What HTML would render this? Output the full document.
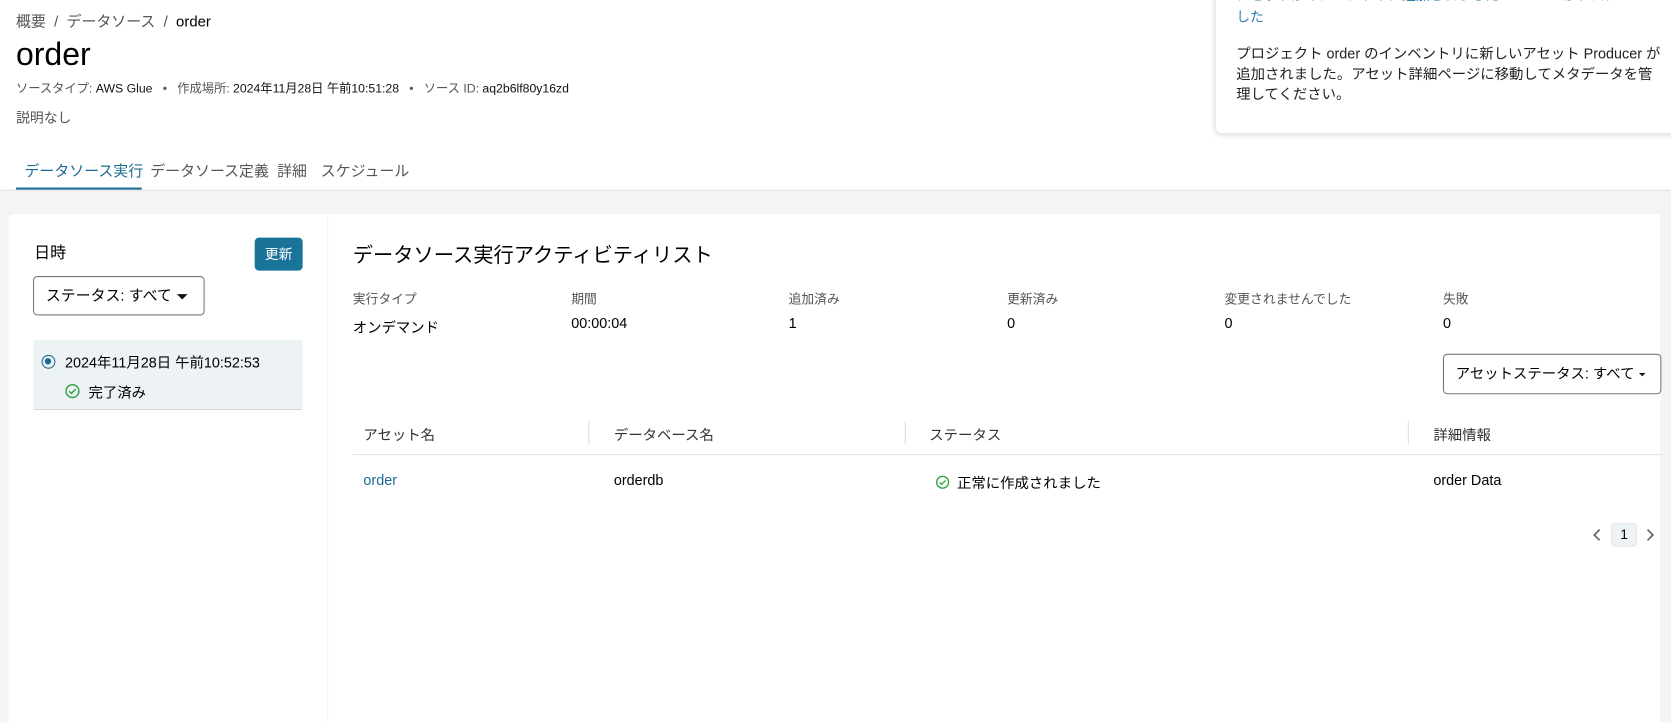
<!DOCTYPE html>
<html><head><meta charset="utf-8">
<style>
*{box-sizing:border-box;margin:0;padding:0}
html,body{width:1671px;height:716px;overflow:hidden;background:#fff}
#w{position:absolute;left:0;top:0;width:1568px;height:672px;transform:scale(1.06569);transform-origin:0 0;font-family:"Liberation Sans","Noto Sans CJK JP",sans-serif;color:#000}
.abs{position:absolute;white-space:nowrap}
.g{color:#555}
.blue{color:#1a6b94}
</style></head><body><div id="w">
<div class="abs g" style="left:15px;top:10px;font-size:14px">概要 &nbsp;/&nbsp; データソース &nbsp;/&nbsp; <span style="color:#000">order</span></div>
<div class="abs" style="left:15px;top:35px;font-size:30px">order</div>
<div class="abs g" style="left:15px;top:75px;font-size:11.5px">ソースタイプ: <span style="color:#111">AWS Glue</span> &nbsp; • &nbsp; 作成場所: <span style="color:#111">2024年11月28日 午前10:51:28</span> &nbsp; • &nbsp; ソース ID: <span style="color:#111">aq2b6lf80y16zd</span></div>
<div class="abs g" style="left:15px;top:100px;font-size:13px">説明なし</div>
<div class="abs" style="left:23px;top:150px;font-size:14px;color:#1a6b94">データソース実行</div>
<div class="abs g" style="left:141px;top:150px;font-size:14px">データソース定義</div>
<div class="abs g" style="left:260px;top:150px;font-size:14px">詳細</div>
<div class="abs g" style="left:301px;top:150px;font-size:14px">スケジュール</div>
<div class="abs" style="left:15px;top:176px;width:118px;height:3px;background:#1a6b94"></div>
<div class="abs" style="left:0;top:178px;width:1568px;height:500px;background:#f4f4f4;border-top:1px solid #e2e2e2"></div>
<div class="abs" style="left:8px;top:201px;width:299px;height:480px;background:#fff;border-radius:4px 0 0 0"></div>
<div class="abs" style="left:32px;top:226px;font-size:15px">日時</div>
<div class="abs" style="left:239px;top:223px;width:45px;height:31px;background:#1a7399;border-radius:4px;color:#fff;font-size:13px;text-align:center;line-height:31px">更新</div>
<div class="abs" style="left:31px;top:259px;width:161px;height:37px;border:1px solid #777;border-radius:4px;font-size:14px;line-height:35px;padding-left:11px">ステータス: すべて<span style="position:absolute;left:134px;top:16px;border-left:5px solid transparent;border-right:5px solid transparent;border-top:5px solid #111"></span></div>
<div class="abs" style="left:31px;top:319px;width:253px;height:66px;background:#edf3f5;border-radius:3px;border-bottom:1px solid #c9cfd2"></div>
<div class="abs" style="left:39px;top:333px;width:13px;height:13px;border:1.5px solid #1a6b94;border-radius:50%"><div style="margin:2px;width:6px;height:6px;border-radius:50%;background:#1a6b94"></div></div>
<div class="abs" style="left:61px;top:329px;font-size:13.5px">2024年11月28日 午前10:52:53</div>
<svg class="abs" style="left:61px;top:360px" width="14" height="14" viewBox="0 0 14 14"><circle cx="7" cy="7" r="6" fill="none" stroke="#37a448" stroke-width="1.4"/><path d="M4 7.2l2 2 4-4" fill="none" stroke="#37a448" stroke-width="1.4"/></svg>
<div class="abs" style="left:83px;top:357px;font-size:13.5px">完了済み</div>
<div class="abs" style="left:308px;top:201px;width:1250px;height:480px;background:#fff"></div>
<div class="abs" style="left:331px;top:225px;font-size:19px">データソース実行アクティビティリスト</div>
<div class="abs g" style="left:331px;top:272px;font-size:12px">実行タイプ</div>
<div class="abs" style="left:331px;top:296px;font-size:13.5px">オンデマンド</div>
<div class="abs g" style="left:536px;top:272px;font-size:12px">期間</div>
<div class="abs" style="left:536px;top:296px;font-size:13.5px">00:00:04</div>
<div class="abs g" style="left:740px;top:272px;font-size:12px">追加済み</div>
<div class="abs" style="left:740px;top:296px;font-size:13.5px">1</div>
<div class="abs g" style="left:945px;top:272px;font-size:12px">更新済み</div>
<div class="abs" style="left:945px;top:296px;font-size:13.5px">0</div>
<div class="abs g" style="left:1149px;top:272px;font-size:12px">変更されませんでした</div>
<div class="abs" style="left:1149px;top:296px;font-size:13.5px">0</div>
<div class="abs g" style="left:1354px;top:272px;font-size:12px">失敗</div>
<div class="abs" style="left:1354px;top:296px;font-size:13.5px">0</div>
<div class="abs" style="left:1354px;top:332px;width:205px;height:38px;border:1px solid #777;border-radius:4px;font-size:13.5px;line-height:36px;padding-left:11px">アセットステータス: すべて<span style="position:absolute;left:183px;top:17px;border-left:3.5px solid transparent;border-right:3.5px solid transparent;border-top:3.5px solid #111"></span></div>
<div class="abs" style="left:341px;top:397px;font-size:13.5px;color:#333">アセット名</div>
<div class="abs" style="left:552px;top:395px;width:1px;height:22px;background:#ddd"></div>
<div class="abs" style="left:576px;top:397px;font-size:13.5px;color:#333">データベース名</div>
<div class="abs" style="left:849px;top:395px;width:1px;height:22px;background:#ddd"></div>
<div class="abs" style="left:872px;top:397px;font-size:13.5px;color:#333">ステータス</div>
<div class="abs" style="left:1321px;top:395px;width:1px;height:22px;background:#ddd"></div>
<div class="abs" style="left:1345px;top:397px;font-size:13.5px;color:#333">詳細情報</div>
<div class="abs" style="left:331px;top:426px;width:1228px;height:1px;background:#e3e3e3"></div>
<div class="abs blue" style="left:341px;top:443px;font-size:13.5px">order</div>
<div class="abs" style="left:576px;top:443px;font-size:13.5px">orderdb</div>
<svg class="abs" style="left:878px;top:446px" width="13" height="13" viewBox="0 0 14 14"><circle cx="7" cy="7" r="6" fill="none" stroke="#37a448" stroke-width="1.4"/><path d="M4 7.2l2 2 4-4" fill="none" stroke="#37a448" stroke-width="1.4"/></svg>
<div class="abs" style="left:898px;top:442px;font-size:13.5px">正常に作成されました</div>
<div class="abs" style="left:1345px;top:443px;font-size:13.5px">order Data</div>
<svg class="abs" style="left:1494px;top:495px" width="10" height="14" viewBox="0 0 10 14"><path d="M7 2L2 7l5 5" fill="none" stroke="#666" stroke-width="1.6"/></svg>
<div class="abs" style="left:1512px;top:491px;width:24px;height:22px;background:#eef3f5;border:1px solid #dde4e7;border-radius:3px;font-size:13px;text-align:center;line-height:20px">1</div>
<svg class="abs" style="left:1543px;top:495px" width="10" height="14" viewBox="0 0 10 14"><path d="M3 2l5 5-5 5" fill="none" stroke="#666" stroke-width="1.6"/></svg>
<div class="abs" style="left:1141px;top:-10px;width:440px;height:135px;background:#fff;border-radius:6px;box-shadow:0 1px 6px rgba(0,0,0,0.18)"></div>
<div class="abs" style="left:1160px;top:-15px;font-size:13px;color:#2e7fa8">アセットがインベントリに追加されました Producer がプロジェ</div>
<div class="abs" style="left:1160px;top:5px;font-size:13px;color:#2e7fa8">した</div>
<div class="abs" style="left:1160px;top:41px;font-size:13.5px;line-height:19px;color:#222">プロジェクト order のインベントリに新しいアセット Producer が<br>追加されました。アセット詳細ページに移動してメタデータを管<br>理してください。</div>
</div></body></html>
